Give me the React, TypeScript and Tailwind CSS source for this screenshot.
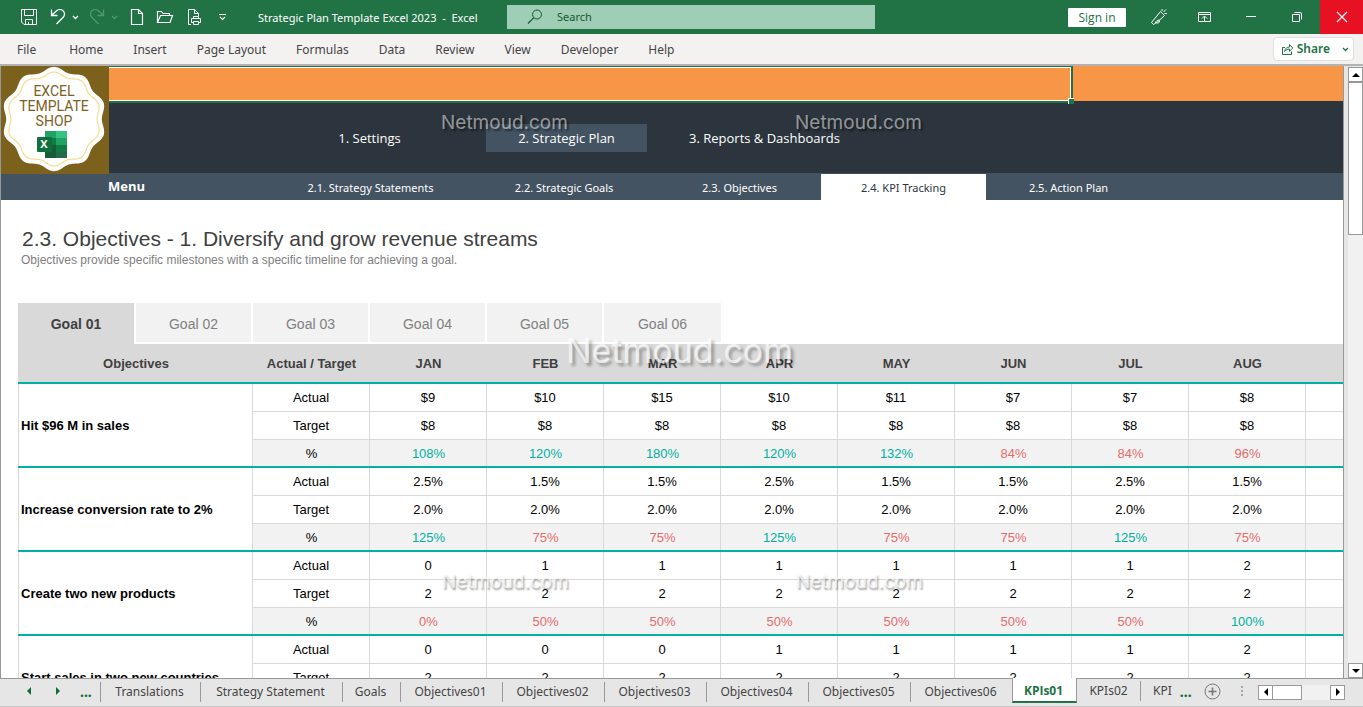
import React from "react";

interface Objective {
  name: string;
  actual: string[];
  target: string[];
  percent: number[];
}

const months = ["JAN", "FEB", "MAR", "APR", "MAY", "JUN", "JUL", "AUG"];

const objectives: Objective[] = [
  {
    name: "Hit $96 M in sales",
    actual: ["$9", "$10", "$15", "$10", "$11", "$7", "$7", "$8"],
    target: ["$8", "$8", "$8", "$8", "$8", "$8", "$8", "$8"],
    percent: [108, 120, 180, 120, 132, 84, 84, 96],
  },
  {
    name: "Increase conversion rate to 2%",
    actual: ["2.5%", "1.5%", "1.5%", "2.5%", "1.5%", "1.5%", "2.5%", "1.5%"],
    target: ["2.0%", "2.0%", "2.0%", "2.0%", "2.0%", "2.0%", "2.0%", "2.0%"],
    percent: [125, 75, 75, 125, 75, 75, 125, 75],
  },
  {
    name: "Create two new products",
    actual: ["0", "1", "1", "1", "1", "1", "1", "2"],
    target: ["2", "2", "2", "2", "2", "2", "2", "2"],
    percent: [0, 50, 50, 50, 50, 50, 50, 100],
  },
  {
    name: "Start sales in two new countries",
    actual: ["0", "0", "0", "1", "1", "1", "1", "2"],
    target: ["2", "2", "2", "2", "2", "2", "2", "2"],
    percent: [],
  },
];

const ribbonTabs = [
  "Home",
  "Insert",
  "Page Layout",
  "Formulas",
  "Data",
  "Review",
  "View",
  "Developer",
  "Help",
];

const subNav = [
  { label: "2.1. Strategy Statements", width: "w-[199px]" },
  { label: "2.2. Strategic Goals", width: "w-[188px]" },
  { label: "2.3. Objectives", width: "w-[163px]" },
  { label: "2.4. KPI Tracking", width: "w-[165px]", active: true },
  { label: "2.5. Action Plan", width: "w-[165px]" },
];

const sheetTabs = [
  { label: "Translations", width: "w-[100px]" },
  { label: "Strategy Statement", width: "w-[142px]" },
  { label: "Goals", width: "w-[58px]" },
  { label: "Objectives01", width: "w-[102px]" },
  { label: "Objectives02", width: "w-[102px]" },
  { label: "Objectives03", width: "w-[102px]" },
  { label: "Objectives04", width: "w-[102px]" },
  { label: "Objectives05", width: "w-[102px]" },
  { label: "Objectives06", width: "w-[102px]" },
];

// closed wavy outline used by the badge
const scallop = (cx: number, cy: number, radius: number, depth: number) => {
  const points: string[] = [];
  for (let i = 0; i < 240; i++) {
    const a = (i / 240) * Math.PI * 2;
    const r = radius + depth * Math.cos(a * 10);
    points.push(`${(cx + r * Math.sin(a)).toFixed(2)},${(cy - r * Math.cos(a)).toFixed(2)}`);
  }
  return `M${points.join("L")}Z`;
};

interface IconProps {
  children: React.ReactNode;
  className?: string;
  width?: number;
  height?: number;
}

const Icon: React.FC<IconProps> = ({ children, className = "", width = 18, height = 18 }) => (
  <svg
    className={`shrink-0 stroke-current ${className}`}
    width={width}
    height={height}
    viewBox={`0 0 ${width} ${height}`}
    fill="none"
    aria-hidden="true"
  >
    {children}
  </svg>
);

const Chevron = ({ className = "" }: { className?: string }) => (
  <Icon width={7} height={5} className={className}>
    <path d="M1 1L3.5 3.5L6 1" strokeWidth="1.3" />
  </Icon>
);

const TitleBar = () => (
  <header className="flex h-[34px] shrink-0 items-center bg-[#217346] text-white">
    <div className="flex w-[507px] shrink-0 items-center pl-5">
      <button aria-label="Save">
        <Icon>
          <path d="M1.5 1.5H16.5V16.5H4L1.5 14ZM4.5 1.5V7.5H13.5V1.5M5.5 16.5V11.5H12.5V16.5M8.5 14V16.5" />
        </Icon>
      </button>
      <button aria-label="Undo" className="ml-3 flex items-center gap-1">
        <Icon>
          <path d="M1.5 1.5V7.5H7.5M1.5 7.5L6 3.2C8 1.2 11 1 13 2.8C15 4.6 15 7.4 13.2 9.3L6.5 16" strokeWidth="1.3" />
        </Icon>
        <Chevron />
      </button>
      <button aria-label="Redo" disabled className="ml-2.5 flex items-center gap-1 text-[#4f9870]">
        <Icon>
          <path d="M14.5 1.5V7.5H8.5M14.5 7.5L10 3.2C8 1.2 5 1 3 2.8C1 4.6 1 7.4 2.8 9.3L9.5 16" strokeWidth="1.3" />
        </Icon>
        <Chevron />
      </button>
      <button aria-label="New" className="ml-3">
        <Icon width={14}>
          <path d="M1.5 1.5H8.5L12.5 5.5V16.5H1.5ZM8.5 1.5V5.5H12.5" strokeWidth="1.2" />
        </Icon>
      </button>
      <button aria-label="Open" className="ml-3">
        <Icon>
          <path d="M1.5 14.5V3.5H5.5L7 5.5H13.5V7.5M1.5 14.5L4.5 7.5H16.5L14 14.5Z" strokeWidth="1.2" />
        </Icon>
      </button>
      <button aria-label="Print preview" className="ml-3">
        <Icon>
          <path d="M5 16.5H2.5V1.5H8.5L12.5 5.5V8M8.5 1.5V5.5H12.5M5.5 14.5V10.5H14.5V14.5H13M7.5 10.5V8.5H12.5V10.5M5.5 14.5H7M7.5 13.5H12.5V16.5H7.5Z" />
        </Icon>
      </button>
      <button aria-label="Customize toolbar" className="ml-3.5">
        <Icon width={9} height={8}>
          <path d="M1 1.5H8M2 4L4.5 6.5L7 4" strokeWidth="1.2" />
        </Icon>
      </button>
      <h1 className="ml-[31px] whitespace-pre pt-0.5 text-[11px]">{"Strategic Plan Template Excel 2023  -  Excel"}</h1>
    </div>
    <label className="flex h-6 w-[368px] items-center bg-[#9fcdb5] pl-5 text-[#0f5c2e]">
      <Icon width={16} height={16}>
        <circle cx="10" cy="5.5" r="4.5" />
        <path d="M6.8 8.7L1 14.5" strokeWidth="1.2" />
      </Icon>
      <input
        type="search"
        aria-label="Search"
        placeholder="Search"
        className="ml-3.5 min-w-0 flex-1 bg-transparent text-[11px] outline-none placeholder:text-[#0f5c2e]"
      />
    </label>
    <div className="ml-auto flex h-full items-center">
      <button className="h-[19px] w-[58px] rounded-[1px] bg-white font-['Open_Sans',sans-serif] text-[12px] leading-[19px] text-[#217346]">
        Sign in
      </button>
      <button aria-label="Coming soon" className="ml-6">
        <Icon>
          <path d="M10.5 3.5L14.5 7.5L8 13.5L3.5 16.5L1.5 14.5ZM5.5 15C6 12.5 9 11 9.5 13C9.8 14.5 8 15.5 6.5 15M12 3V1M13.5 4L16 1.5M14.5 5.5H17" />
        </Icon>
      </button>
      <button aria-label="Ribbon display options" className="ml-[29px]">
        <Icon width={15} height={12}>
          <path d="M1.5 1.5H13.5V10.5H1.5ZM1.5 3.5H13.5M7.5 10V5.5M5 7.5L7.5 5L10 7.5" />
        </Icon>
      </button>
      <button aria-label="Minimize" className="ml-[33px]">
        <Icon width={12} height={12}>
          <path d="M1 5.5H11" />
        </Icon>
      </button>
      <button aria-label="Restore" className="ml-[34px]">
        <Icon width={12} height={12}>
          <path d="M1.5 3.5H8.5V10.5H1.5ZM3.5 1.5H9Q10.5 1.5 10.5 3V8.5" />
        </Icon>
      </button>
      <button aria-label="Close" className="ml-[17px] flex h-full w-[43px] items-center justify-center bg-[#e81123]">
        <Icon width={12} height={12}>
          <path d="M1 1L11 11M11 1L1 11" strokeWidth="1.2" />
        </Icon>
      </button>
    </div>
  </header>
);

const Ribbon = () => (
  <nav className="flex h-8 shrink-0 items-center border-b-2 border-[#b4b2b0] bg-[#f3f2f1] pl-[17px] pr-[9px] text-[12px] text-[#444444]">
    <button className="mr-[33px] pt-0.5">File</button>
    <div className="flex gap-[30px] pt-0.5">
      {ribbonTabs.map((tab) => (
        <button key={tab}>{tab}</button>
      ))}
    </div>
    <button className="ml-auto flex h-6 items-center rounded-sm border border-[#e1dfdd] bg-white pl-[7px] pr-1 font-semibold text-[#217346]">
      <Icon width={13} height={13} className="mr-[3px]">
        <path d="M4 4.5H1.5V11.5H10.5V8.5M3.5 8.5C4 5.5 6 4 8.5 4V1.5L11.8 5L8.5 8.2V6C6.5 6 5 6.8 3.5 8.5Z" />
      </Icon>
      Share
      <Chevron className="ml-3" />
    </button>
  </nav>
);

const Badge = () => (
  <svg className="h-[108px] w-[108px] shrink-0" viewBox="0 0 108 108" role="img" aria-label="Excel Template Shop">
    <rect width="108" height="108" fill="#7b611c" />
    <path d={scallop(53, 53, 50, 2.2)} fill="#ffffff" />
    <path d={scallop(53, 53, 45, 1.9)} fill="none" stroke="#f6dc8c" strokeWidth="1.2" />
    <g fill="#7b611c" fontFamily="Roboto, sans-serif" fontSize="14" textAnchor="middle">
      <text x="53" y="30">EXCEL</text>
      <text x="53" y="45">TEMPLATE</text>
      <text x="53" y="60">SHOP</text>
    </g>
    <rect x="44" y="65" width="11" height="7" fill="#21a366" />
    <rect x="55" y="65" width="11" height="7" fill="#33c481" />
    <rect x="44" y="72" width="11" height="7" fill="#107c41" />
    <rect x="55" y="72" width="11" height="7" fill="#21a366" />
    <rect x="44" y="79" width="11" height="13" fill="#185c37" />
    <rect x="55" y="79" width="11" height="7" fill="#107c41" />
    <rect x="55" y="86" width="11" height="6" fill="#27694a" />
    <rect x="36" y="71" width="15" height="15" rx="1" fill="#10703b" />
    <text x="43" y="82" fill="#ffffff" fontFamily="Open Sans, sans-serif" fontSize="11" fontWeight="700" textAnchor="middle">
      X
    </text>
  </svg>
);

const SheetHeader = () => (
  <div className="bg-[#445362] text-white">
    <div className="flex">
      <Badge />
      <div className="min-w-0 flex-1">
        <div className="h-[35px] bg-[#f79646]">
          {/* active cell outline */}
          <div className="relative h-[37px] w-[964px] border-b-2 border-r-2 border-t border-[#217346]">
            <div className="h-full border-y border-r border-white" />
            <span className="absolute -bottom-[3px] -right-[3px] h-1.5 w-1.5 border-l border-t border-white bg-[#217346]" />
          </div>
        </div>
        <nav className="flex h-[72px] items-start gap-9 bg-[#2c353d] pl-[180px] pt-[23px] font-['Open_Sans',sans-serif] text-[13px]">
          <a href="#settings" className="w-[161px] text-center leading-7">1. Settings</a>
          <a href="#plan" className="w-[161px] bg-[#445362] text-center leading-7">2. Strategic Plan</a>
          <a href="#reports" className="w-[163px] whitespace-nowrap text-center leading-7">3. Reports &amp; Dashboards</a>
        </nav>
      </div>
    </div>
    <nav className="flex h-[26px] pl-[107px] text-[11px] leading-[28px]">
      <span className="w-[163px] font-['Open_Sans',sans-serif] text-[13px] font-bold leading-6">Menu</span>
      {subNav.map((item) => (
        <a
          key={item.label}
          href="#kpi"
          className={`${item.width} text-center ${item.active ? "bg-white text-[#2c353d]" : ""}`}
        >
          {item.label}
        </a>
      ))}
    </nav>
  </div>
);

const GoalTabs = () => (
  <div className="flex gap-0.5 text-[14px] text-[#808080]">
    {[1, 2, 3, 4, 5, 6].map((n) => (
      <button
        key={n}
        className={
          n === 1
            ? "h-[41px] w-[116px] bg-[#d9d9d9] pt-0.5 font-bold text-[#404040]"
            : `h-[39px] bg-[#f2f2f2] pt-1 ${n === 6 ? "w-[117px]" : "w-[115px]"}`
        }
      >
        Goal 0{n}
      </button>
    ))}
  </div>
);

const cell = "h-7 border-l border-b border-[#d9d9d9] p-0";
// the grid line is an inset shadow here so that the teal rule runs unbroken
const lastCell = "h-7 border-b-2 border-[#00b0a0] bg-[#f2f2f2] p-0 pl-0.5 pt-0.5 shadow-[inset_1px_0_0_#d9d9d9]";

const KpiTable = () => (
  <table className="w-full table-fixed border-separate border-spacing-0 text-center text-[13px] leading-4 text-black">
    <colgroup>
      <col className="w-[234px]" />
      {["type", ...months].map((m) => (
        <col key={m} className="w-[117px]" />
      ))}
      <col />
    </colgroup>
    <thead>
      <tr className="bg-[#d9d9d9] text-[#404040]">
        {["Objectives", "Actual / Target", ...months, ""].map((h) => (
          <th key={h} className="h-10 border-b-2 border-[#00b0a0] p-0 pl-0.5 pt-0.5">
            {h}
          </th>
        ))}
      </tr>
    </thead>
    {objectives.map((o) => (
      <tbody key={o.name}>
        <tr>
          <th rowSpan={3} className="border-b-2 border-[#00b0a0] p-0 pl-[3px] pt-0.5 text-left shadow-[inset_1px_0_0_#d9d9d9]">
            {o.name}
          </th>
          <td className={cell}>Actual</td>
          {months.map((m, i) => (
            <td key={m} className={cell}>{o.actual[i]}</td>
          ))}
          <td className={cell} />
        </tr>
        <tr>
          <td className={cell}>Target</td>
          {months.map((m, i) => (
            <td key={m} className={cell}>{o.target[i]}</td>
          ))}
          <td className={cell} />
        </tr>
        <tr>
          <td className={lastCell}>{o.percent.length > 0 && "%"}</td>
          {months.map((m, i) => (
            <td key={m} className={`${lastCell} ${o.percent[i] >= 100 ? "text-[#00b0a0]" : "text-[#e46c6c]"}`}>
              {o.percent[i] !== undefined && `${o.percent[i]}%`}
            </td>
          ))}
          <td className={lastCell} />
        </tr>
      </tbody>
    ))}
  </table>
);

const Arrow = ({ d, className = "" }: { d: string; className?: string }) => (
  <svg className={`fill-current ${className}`} width="8" height="8" viewBox="0 0 8 8" aria-hidden="true">
    <path d={d} />
  </svg>
);

const LEFT = "M6 0V8L2 4Z";
const RIGHT = "M2 0V8L6 4Z";
const UP = "M0 6H8L4 2Z";
const DOWN = "M0 2H8L4 6Z";

const VerticalScroll = () => (
  <div className="flex w-5 shrink-0 flex-col border-l border-[#999999] bg-[#e6e6e6] pl-1 pt-px">
    <div className="flex flex-1 flex-col bg-[#f1f1f1]">
      <button aria-label="Scroll up" className="flex h-[15px] items-center justify-center border border-[#999999] bg-white text-black">
        <Arrow d={UP} />
      </button>
      <div className="h-[153px] border border-[#999999] bg-white" />
      <button aria-label="Scroll down" className="mt-auto flex h-[15px] items-center justify-center border border-[#999999] bg-white text-black">
        <Arrow d={DOWN} />
      </button>
    </div>
  </div>
);

const SheetTabs = () => (
  <footer className="flex h-[29px] shrink-0 items-start border-b border-[#c6c6c6] bg-[#e6e6e6] text-[12px] text-[#444444]">
    <div className="flex h-[25px] w-[100px] items-center border-t border-[#999999] pl-[25px] text-[#0f6b35]">
      <button aria-label="Previous sheet">
        <Arrow d={LEFT} />
      </button>
      <button aria-label="Next sheet" className="ml-[21px]">
        <Arrow d={RIGHT} />
      </button>
      <button aria-label="More sheets" className="ml-[18px] text-[14px] font-bold">...</button>
    </div>
    {sheetTabs.map((tab) => (
      <div key={tab.label} className={`${tab.width} h-[25px] shrink-0 border-t border-[#999999] pt-[3px]`}>
        <button className="h-5 w-full whitespace-nowrap border-l border-[#999999] pr-0.5 leading-5">{tab.label}</button>
      </div>
    ))}
    <button className="h-[25px] w-[65px] shrink-0 border-x border-b-2 border-x-[#999999] border-b-[#217346] bg-white pr-0.5 pt-0.5 font-['Open_Sans',sans-serif] font-bold text-[#217346]">
      KPIs01
    </button>
    <div className="flex h-[25px] min-w-0 flex-1 items-center border-t border-[#999999]">
      <button className="h-5 w-[64px] border-r border-[#999999]">KPIs02</button>
      <button className="ml-3">KPI</button>
      <button aria-label="More sheets right" className="ml-2 text-[14px] font-bold text-[#0f6b35]">...</button>
      <button aria-label="New sheet" className="ml-3 text-[#777777]">
        <Icon width={17} height={17}>
          <circle cx="8.5" cy="8.5" r="7.5" />
          <path d="M8.5 4.5V12.5M4.5 8.5H12.5" strokeWidth="1.6" />
        </Icon>
      </button>
      <Icon width={4} height={12} className="ml-[19px] text-[#a6a6a6]">
        <path d="M2 1V3M2 5V7M2 9V11" strokeWidth="2" />
      </Icon>
      <div className="ml-auto mr-[18px] mt-0.5 flex h-[15px] w-[87px] bg-[#f1f1f1] text-black">
        <button aria-label="Scroll left" className="flex w-[15px] items-center justify-center border border-[#999999] bg-white">
          <Arrow d={LEFT} />
        </button>
        <div className="w-[29px] border border-l-0 border-[#999999] bg-white" />
        <button aria-label="Scroll right" className="ml-auto flex w-[15px] items-center justify-center border border-[#999999] bg-white">
          <Arrow d={RIGHT} />
        </button>
      </div>
    </div>
  </footer>
);

const Watermark = ({ className }: { className: string }) => (
  <span className={`pointer-events-none absolute font-['Inter',sans-serif] ${className}`}>Netmoud.com</span>
);

const App: React.FC = () => {
  return (
    <div className="relative flex h-screen flex-col overflow-hidden bg-white font-['Noto_Sans','Open_Sans',sans-serif]">
      <TitleBar />
      <Ribbon />
      <div className="flex min-h-0 flex-1">
        <main className="min-w-0 flex-1 overflow-hidden border-l border-[#999999]">
          <SheetHeader />
          <div className="pl-[17px] pt-[26px] font-['Liberation_Sans',Arial,sans-serif]">
            <h2 className="pl-1 text-[21px] leading-[26px] text-[#404040]">
              2.3. Objectives - 1. Diversify and grow revenue streams
            </h2>
            <p className="mb-[35px] pl-[3px] text-[12px] leading-4 text-[#808080]">
              Objectives provide specific milestones with a specific timeline for achieving a goal.
            </p>
            <GoalTabs />
            <KpiTable />
          </div>
        </main>
        <VerticalScroll />
      </div>
      <SheetTabs />

      <Watermark className="left-[441px] top-[111px] text-[19px] leading-6 text-white/50 [text-shadow:2px_2px_2px_rgba(0,0,0,0.5)]" />
      <Watermark className="left-[795px] top-[111px] text-[19px] leading-6 text-white/50 [text-shadow:2px_2px_2px_rgba(0,0,0,0.5)]" />
      <Watermark className="left-[566px] top-[333px] text-[34px] leading-9 text-white/70 [text-shadow:3px_3px_3px_rgba(0,0,0,0.3)]" />
      <Watermark className="left-[442px] top-[570px] text-[19px] leading-6 text-white/70 [text-shadow:1px_2px_2px_rgba(0,0,0,0.4)]" />
      <Watermark className="left-[796px] top-[570px] text-[19px] leading-6 text-white/70 [text-shadow:1px_2px_2px_rgba(0,0,0,0.4)]" />
    </div>
  );
};

export default App;
